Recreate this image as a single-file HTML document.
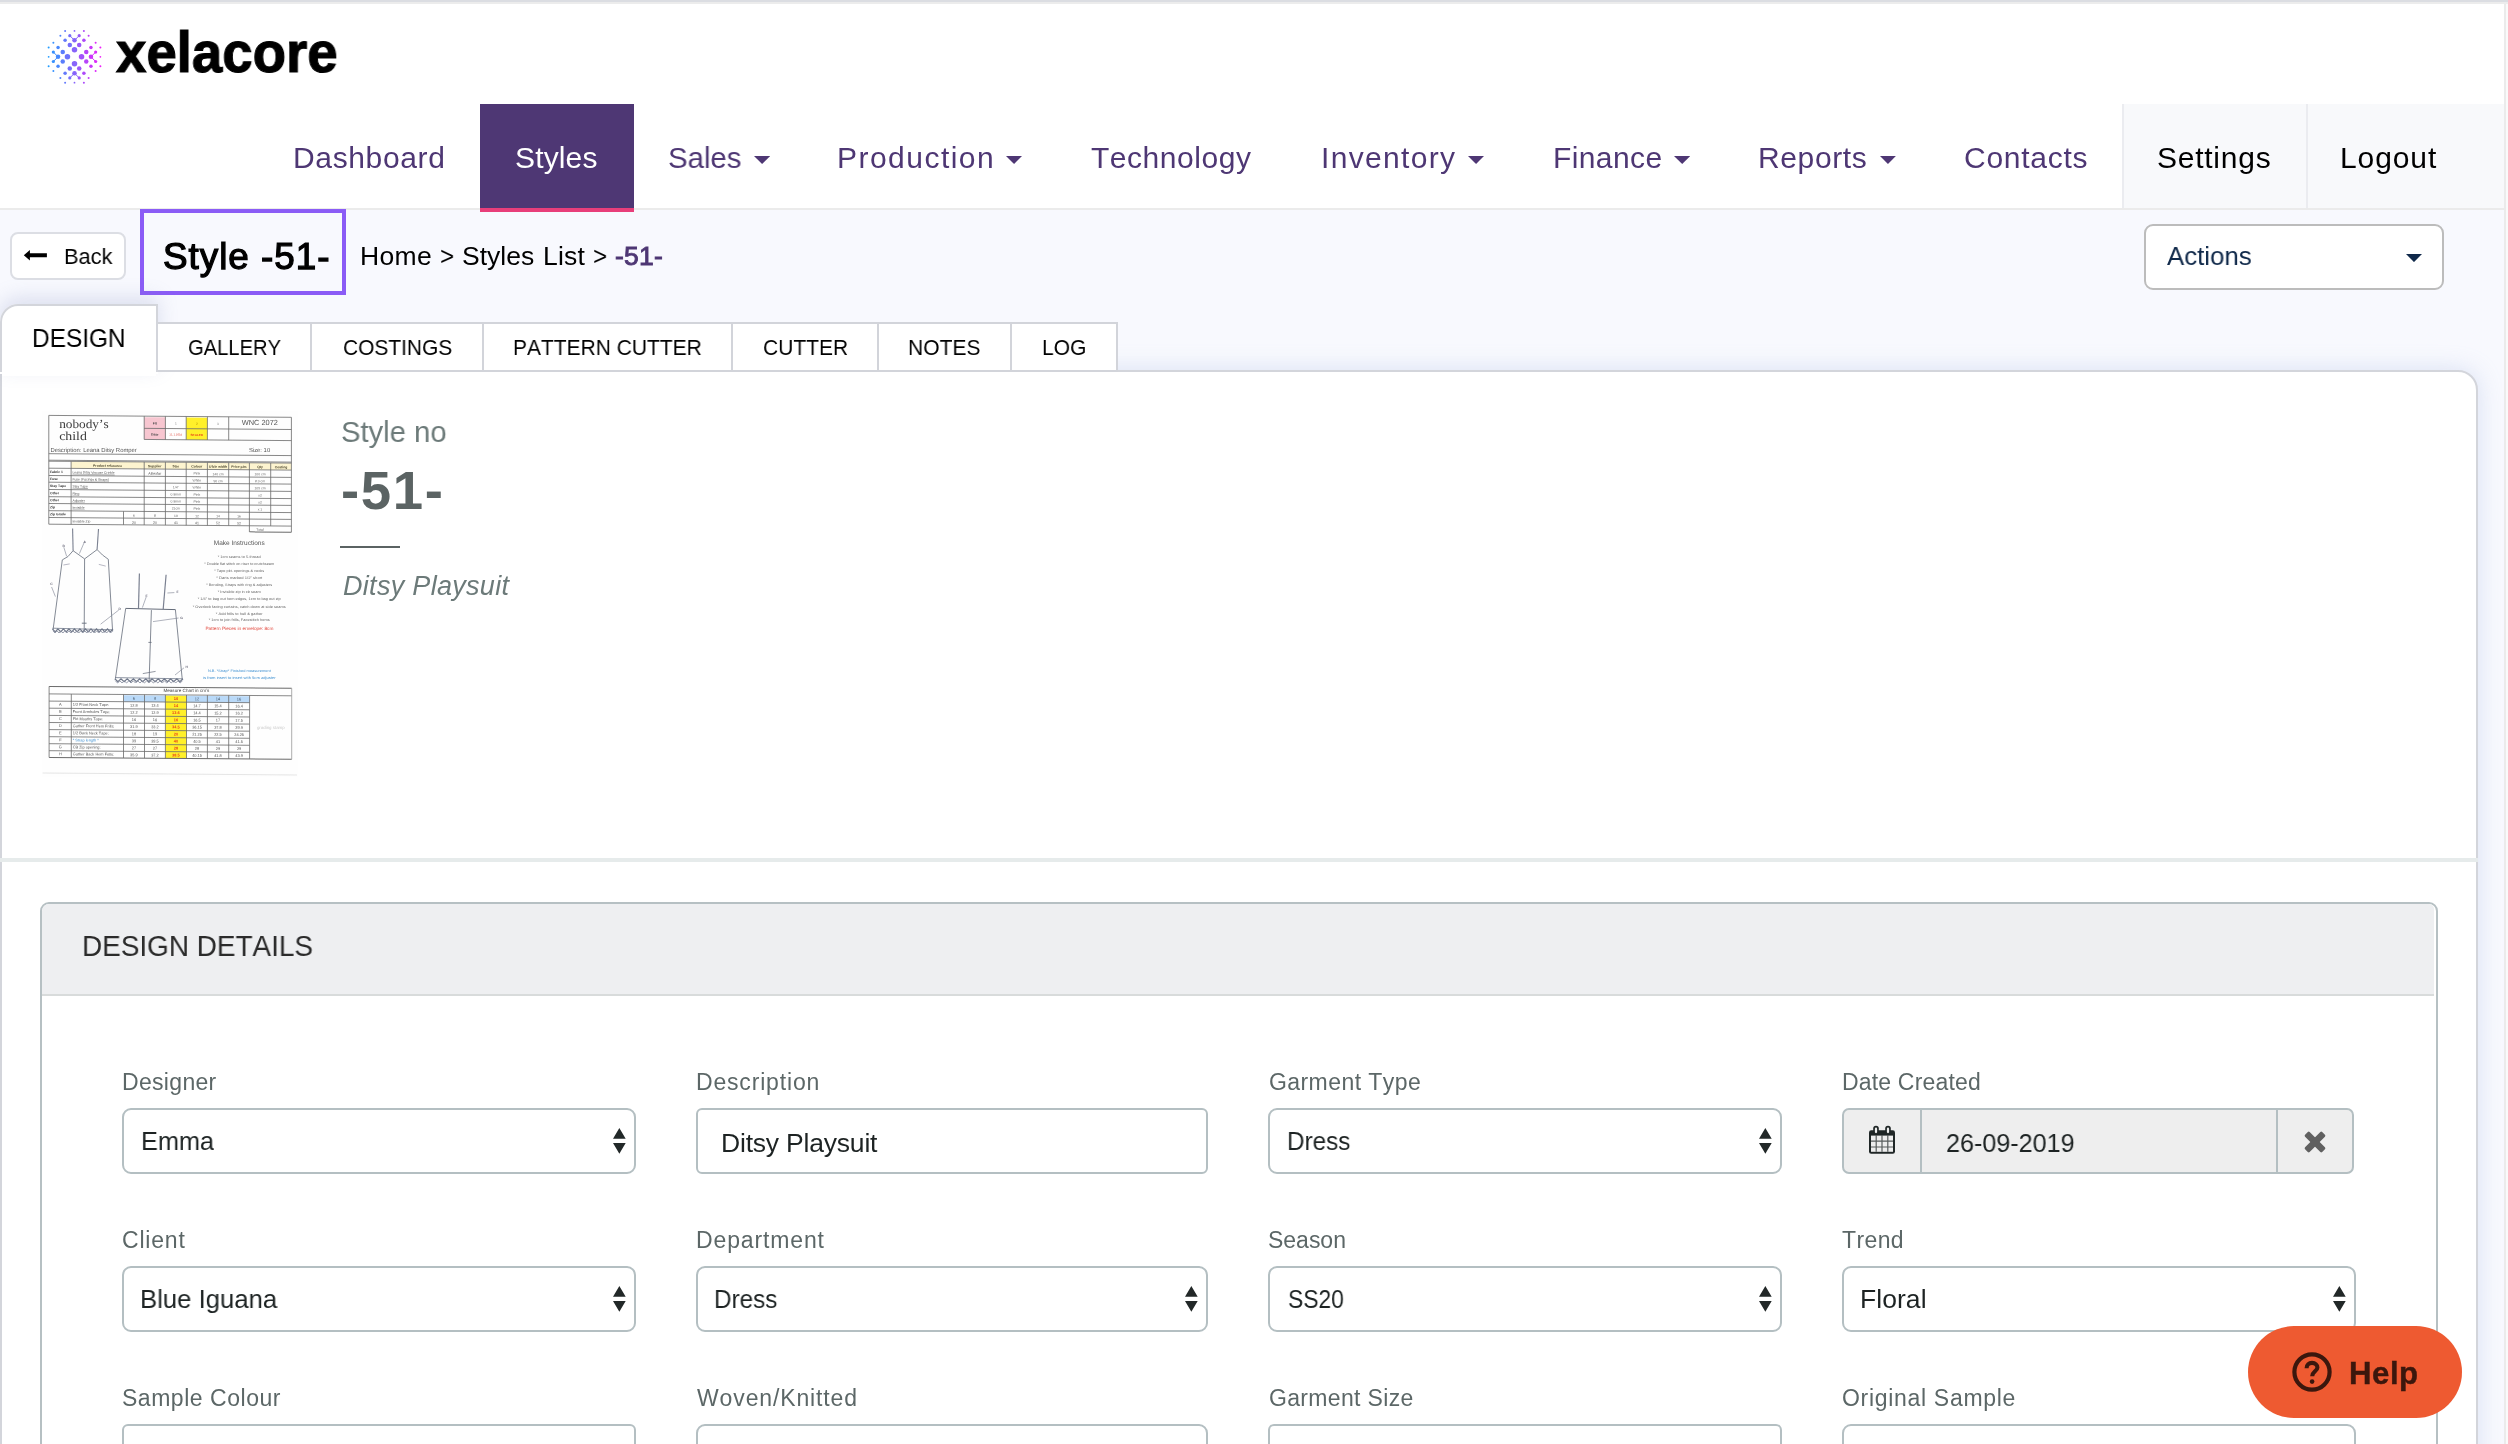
<!DOCTYPE html>
<html lang="en"><head><meta charset="utf-8"><title>Style -51-</title>
<style>
html,body{margin:0;padding:0}
html{width:2508px;height:1444px;overflow:hidden}
body{width:2508px;height:1444px;overflow:hidden;position:relative;background:#f8f9fe;font-family:"Liberation Sans",sans-serif;font-kerning:none}
#w{position:absolute;left:0;top:0;width:2508px;height:1444px;overflow:hidden}
#w>div,#w>span,#w>svg{position:absolute}
.t{white-space:pre;line-height:1;transform-origin:0 0;will-change:transform}
</style></head><body><div id="w">
<div style="left:0px;top:0px;width:2508px;height:2px;background:#dbdde2"></div>
<div style="left:0px;top:2px;width:2508px;height:2px;background:#ececec"></div>
<div style="left:0px;top:4px;width:2508px;height:204px;background:#fff"></div>
<div style="left:0px;top:208px;width:2508px;height:2px;background:#ebebeb"></div>
<div style="left:2122px;top:104px;width:382px;height:104px;background:#f8f9fb"></div>
<div style="left:2122px;top:104px;width:2px;height:104px;background:#ebecf0"></div>
<div style="left:2306px;top:104px;width:2px;height:104px;background:#ebecf0"></div>
<div style="left:480px;top:104px;width:154px;height:104px;background:#4e3774"></div>
<div style="left:480px;top:208px;width:154px;height:4px;background:#e83e7a"></div>
<svg style="left:40px;top:20px" width="70" height="74" viewBox="0 0 70 74"><circle cx="34.50" cy="29.75" r="2.75" fill="#8764fa"/><circle cx="29.80" cy="25.05" r="2.25" fill="#756efb"/><circle cx="39.20" cy="25.05" r="2.25" fill="#9a57fa"/><circle cx="25.10" cy="20.35" r="1.75" fill="#6379fc"/><circle cx="34.50" cy="20.35" r="2.25" fill="#8764fa"/><circle cx="43.90" cy="20.35" r="1.75" fill="#ad4afa"/><circle cx="20.40" cy="15.65" r="1.0" fill="#5183fd"/><circle cx="29.80" cy="15.65" r="1.6" fill="#756efb"/><circle cx="39.20" cy="15.65" r="1.6" fill="#9a57fa"/><circle cx="48.60" cy="15.65" r="1.0" fill="#bf3efa"/><circle cx="25.10" cy="10.95" r="1.0" fill="#6379fc"/><circle cx="34.50" cy="10.95" r="0.9" fill="#8764fa"/><circle cx="43.90" cy="10.95" r="1.0" fill="#ad4afa"/><line x1="34.50" y1="20.35" x2="29.80" y2="15.65" stroke="#7e69fa" stroke-width="1"/><line x1="34.50" y1="20.35" x2="39.20" y2="15.65" stroke="#905efa" stroke-width="1"/><circle cx="34.50" cy="43.85" r="2.75" fill="#8764fa"/><circle cx="29.80" cy="48.55" r="2.25" fill="#756efb"/><circle cx="39.20" cy="48.55" r="2.25" fill="#9a57fa"/><circle cx="25.10" cy="53.25" r="1.75" fill="#6379fc"/><circle cx="34.50" cy="53.25" r="2.25" fill="#8764fa"/><circle cx="43.90" cy="53.25" r="1.75" fill="#ad4afa"/><circle cx="20.40" cy="57.95" r="1.0" fill="#5183fd"/><circle cx="29.80" cy="57.95" r="1.6" fill="#756efb"/><circle cx="39.20" cy="57.95" r="1.6" fill="#9a57fa"/><circle cx="48.60" cy="57.95" r="1.0" fill="#bf3efa"/><circle cx="25.10" cy="62.65" r="1.0" fill="#6379fc"/><circle cx="34.50" cy="62.65" r="0.9" fill="#8764fa"/><circle cx="43.90" cy="62.65" r="1.0" fill="#ad4afa"/><line x1="34.50" y1="53.25" x2="29.80" y2="57.95" stroke="#7e69fa" stroke-width="1"/><line x1="34.50" y1="53.25" x2="39.20" y2="57.95" stroke="#905efa" stroke-width="1"/><circle cx="27.45" cy="36.80" r="2.75" fill="#6c73fb"/><circle cx="22.75" cy="32.10" r="2.25" fill="#5a7efc"/><circle cx="22.75" cy="41.50" r="2.25" fill="#5a7efc"/><circle cx="18.05" cy="27.40" r="1.75" fill="#4888fd"/><circle cx="18.05" cy="36.80" r="2.25" fill="#4888fd"/><circle cx="18.05" cy="46.20" r="1.75" fill="#4888fd"/><circle cx="13.35" cy="22.70" r="1.0" fill="#3692fe"/><circle cx="13.35" cy="32.10" r="1.6" fill="#3692fe"/><circle cx="13.35" cy="41.50" r="1.6" fill="#3692fe"/><circle cx="13.35" cy="50.90" r="1.0" fill="#3692fe"/><circle cx="8.65" cy="27.40" r="1.0" fill="#249cff"/><circle cx="8.65" cy="36.80" r="0.9" fill="#249cff"/><circle cx="8.65" cy="46.20" r="1.0" fill="#249cff"/><line x1="18.05" y1="36.80" x2="13.35" y2="32.10" stroke="#3f8dfd" stroke-width="1"/><line x1="18.05" y1="36.80" x2="13.35" y2="41.50" stroke="#3f8dfd" stroke-width="1"/><circle cx="41.55" cy="36.80" r="2.75" fill="#a351fa"/><circle cx="46.25" cy="32.10" r="2.25" fill="#b644fa"/><circle cx="46.25" cy="41.50" r="2.25" fill="#b644fa"/><circle cx="50.95" cy="27.40" r="1.75" fill="#c937fa"/><circle cx="50.95" cy="36.80" r="2.25" fill="#c937fa"/><circle cx="50.95" cy="46.20" r="1.75" fill="#c937fa"/><circle cx="55.65" cy="22.70" r="1.0" fill="#dc2afa"/><circle cx="55.65" cy="32.10" r="1.6" fill="#dc2afa"/><circle cx="55.65" cy="41.50" r="1.6" fill="#dc2afa"/><circle cx="55.65" cy="50.90" r="1.0" fill="#dc2afa"/><circle cx="60.35" cy="27.40" r="1.0" fill="#ee1efa"/><circle cx="60.35" cy="36.80" r="0.9" fill="#ee1efa"/><circle cx="60.35" cy="46.20" r="1.0" fill="#ee1efa"/><line x1="50.95" y1="36.80" x2="55.65" y2="32.10" stroke="#d231fa" stroke-width="1"/><line x1="50.95" y1="36.80" x2="55.65" y2="41.50" stroke="#d231fa" stroke-width="1"/></svg>
<span class="t" style="left:115.93px;top:24.57px;font-size:56.5px;color:#000;transform:scaleX(0.9661);font-weight:700;-webkit-text-stroke:1.1px #000;">xelacore</span>
<span class="t" style="left:293.34px;top:142.70px;font-size:30px;letter-spacing:0.641px;color:#4e3774;">Dashboard</span>
<span class="t" style="left:515.14px;top:142.70px;font-size:30px;letter-spacing:0.150px;color:#fff;">Styles</span>
<span class="t" style="left:667.57px;top:142.70px;font-size:30px;color:#4e3774;transform:scaleX(0.9794);">Sales</span>
<svg style="left:754.2px;top:156.3px" width="16.2" height="7.9" viewBox="0 0 16.2 7.9"><path d="M0 0H16.2L8.10 7.9Z" fill="#4e3774"/></svg>
<span class="t" style="left:837.34px;top:142.70px;font-size:30px;letter-spacing:1.476px;color:#4e3774;">Production</span>
<svg style="left:1005.9px;top:156.3px" width="16.1" height="7.9" viewBox="0 0 16.1 7.9"><path d="M0 0H16.1L8.05 7.9Z" fill="#4e3774"/></svg>
<span class="t" style="left:1091.43px;top:142.70px;font-size:30px;letter-spacing:0.537px;color:#4e3774;">Technology</span>
<span class="t" style="left:1321.23px;top:142.70px;font-size:30px;letter-spacing:1.329px;color:#4e3774;">Inventory</span>
<svg style="left:1468px;top:156.3px" width="16.1" height="7.9" viewBox="0 0 16.1 7.9"><path d="M0 0H16.1L8.05 7.9Z" fill="#4e3774"/></svg>
<span class="t" style="left:1553.34px;top:142.70px;font-size:30px;letter-spacing:0.394px;color:#4e3774;">Finance</span>
<svg style="left:1673.8px;top:156.3px" width="16.4" height="7.9" viewBox="0 0 16.4 7.9"><path d="M0 0H16.4L8.20 7.9Z" fill="#4e3774"/></svg>
<span class="t" style="left:1758.44px;top:142.70px;font-size:30px;letter-spacing:0.633px;color:#4e3774;">Reports</span>
<svg style="left:1880px;top:156.3px" width="15.9" height="7.9" viewBox="0 0 15.9 7.9"><path d="M0 0H15.9L7.95 7.9Z" fill="#4e3774"/></svg>
<span class="t" style="left:1963.58px;top:142.70px;font-size:30px;letter-spacing:0.731px;color:#4e3774;">Contacts</span>
<span class="t" style="left:2156.74px;top:142.70px;font-size:30px;letter-spacing:0.750px;color:#000;">Settings</span>
<span class="t" style="left:2339.94px;top:142.70px;font-size:30px;letter-spacing:0.905px;color:#000;">Logout</span>
<div style="left:10px;top:232px;width:116px;height:48px;background:#fff;border:2px solid #dcdee4;border-radius:8px;box-sizing:border-box"></div>
<svg style="left:22px;top:247px" width="28" height="16" viewBox="0 0 28 16"><path d="M1.8 8.3L7.9 3V6.3H24.9V10.3H7.9V13.6Z" fill="#000"/></svg>
<span class="t" style="left:64.11px;top:245.55px;font-size:22.5px;color:#000;transform:scaleX(0.9687);">Back</span>
<div style="left:140px;top:209px;width:206px;height:86px;border:4px solid #8b5cf6;box-sizing:border-box;background:#f8f9fe"></div>
<span class="t" style="left:162.93px;top:239.05px;font-size:36.8px;letter-spacing:0.992px;color:#000;-webkit-text-stroke:1.25px #000;">Style -51-</span>
<span class="t" style="left:359.83px;top:243.47px;font-size:26.5px;letter-spacing:0.354px;color:#000;">Home</span>
<span class="t" style="left:439.81px;top:243.47px;font-size:26.5px;color:#000;transform:scaleX(0.9088);">&gt;</span>
<span class="t" style="left:461.90px;top:243.47px;font-size:26.5px;letter-spacing:-0.000px;color:#000;">Styles</span>
<span class="t" style="left:543.13px;top:243.47px;font-size:26.5px;letter-spacing:0.177px;color:#000;">List</span>
<span class="t" style="left:593.41px;top:243.47px;font-size:26.5px;color:#000;transform:scaleX(0.9088);">&gt;</span>
<span class="t" style="left:615.32px;top:243.47px;font-size:26.5px;letter-spacing:0.210px;color:#4e3774;-webkit-text-stroke:0.9px #4e3774;">-51-</span>
<div style="left:2144px;top:224px;width:300px;height:66px;background:#fff;border:2px solid #bcbcbc;border-radius:9px;box-sizing:border-box"></div>
<span class="t" style="left:2167.05px;top:243.47px;font-size:26.5px;color:#10294a;transform:scaleX(0.9733);">Actions</span>
<svg style="left:2406px;top:253.9px" width="16.0" height="8.1" viewBox="0 0 16.0 8.1"><path d="M0 0H16.0L8.00 8.1Z" fill="#10294a"/></svg>
<div style="left:0px;top:370px;width:2478px;height:1100px;background:#fff;border:2px solid #d3d5db;border-top-right-radius:20px;box-sizing:border-box;box-shadow:0 0 24px rgba(150,170,215,.31)"></div>
<div style="left:0px;top:304px;width:158px;height:70px;background:#fff;border-top-left-radius:18px;box-shadow:0 -6px 20px rgba(125,140,190,.24)"></div>
<div style="left:156px;top:322px;width:962px;height:50px;background:#fff;border:2px solid #d2d4da;box-sizing:border-box"></div>
<div style="left:310px;top:324px;width:2px;height:46px;background:#d2d4da"></div>
<div style="left:482px;top:324px;width:2px;height:46px;background:#d2d4da"></div>
<div style="left:730.5px;top:324px;width:2px;height:46px;background:#d2d4da"></div>
<div style="left:876.5px;top:324px;width:2px;height:46px;background:#d2d4da"></div>
<div style="left:1010px;top:324px;width:2px;height:46px;background:#d2d4da"></div>
<span class="t" style="left:188.49px;top:336.75px;font-size:22.5px;color:#000;transform:scaleX(0.8965);">GALLERY</span>
<span class="t" style="left:343.14px;top:336.75px;font-size:22.5px;color:#000;transform:scaleX(0.9295);">COSTINGS</span>
<span class="t" style="left:512.98px;top:336.75px;font-size:22.5px;color:#000;transform:scaleX(0.9323);">PATTERN CUTTER</span>
<span class="t" style="left:762.53px;top:336.75px;font-size:22.5px;color:#000;transform:scaleX(0.9331);">CUTTER</span>
<span class="t" style="left:908.07px;top:336.75px;font-size:22.5px;color:#000;transform:scaleX(0.9353);">NOTES</span>
<span class="t" style="left:1041.68px;top:336.75px;font-size:22.5px;color:#000;transform:scaleX(0.9343);">LOG</span>
<div style="left:0px;top:304px;width:158px;height:68px;background:#fff;border:2px solid #d3d5db;border-bottom:none;border-top-left-radius:18px;box-sizing:border-box"></div>
<div style="left:2px;top:370px;width:154px;height:6px;background:#fff"></div>
<span class="t" style="left:31.60px;top:326.01px;font-size:25.5px;color:#000;transform:scaleX(0.9573);">DESIGN</span>
<svg style="left:40px;top:405px" width="262" height="380" viewBox="0 0 262 380" font-family="Liberation Sans,sans-serif" text-rendering="geometricPrecision"><defs><filter id="bl" x="-5%" y="-5%" width="110%" height="110%"><feGaussianBlur stdDeviation="0.35"/></filter></defs><rect x="2" y="6" width="256" height="366" fill="#fefefe"/><g filter="url(#bl)"><g transform="translate(9 10) skewY(0.45) translate(-9 -10)"><rect x="104.2" y="11.4" width="21.2" height="22.3" fill="#f7c6d0"/><rect x="146.2" y="11.4" width="21.2" height="22.3" fill="#fff02a"/><rect x="31.1" y="56.3" width="220.3" height="6.9" fill="#fdf4cf"/><path d="M8.8 10.4L251.4 10.4" stroke="#6a6a6a" stroke-width="0.8"/><path d="M8.8 48.7L251.4 48.7" stroke="#6a6a6a" stroke-width="0.8"/><path d="M8.8 55.2L251.4 55.2" stroke="#6a6a6a" stroke-width="0.8"/><path d="M8.8 56.2L251.4 56.2" stroke="#6a6a6a" stroke-width="0.8"/><path d="M8.8 63.2L251.4 63.2" stroke="#6a6a6a" stroke-width="0.8"/><path d="M8.8 70.5L251.4 70.5" stroke="#6a6a6a" stroke-width="0.8"/><path d="M8.8 77.2L251.4 77.2" stroke="#6a6a6a" stroke-width="0.8"/><path d="M8.8 84.5L251.4 84.5" stroke="#6a6a6a" stroke-width="0.8"/><path d="M8.8 91.7L251.4 91.7" stroke="#6a6a6a" stroke-width="0.8"/><path d="M8.8 98.5L251.4 98.5" stroke="#6a6a6a" stroke-width="0.8"/><path d="M8.8 105.7L251.4 105.7" stroke="#6a6a6a" stroke-width="0.8"/><path d="M8.8 112.5L251.4 112.5" stroke="#6a6a6a" stroke-width="0.8"/><path d="M8.8 119.2L251.4 119.2" stroke="#6a6a6a" stroke-width="0.8"/><path d="M8.8 10.4L8.8 119.2" stroke="#6a6a6a" stroke-width="0.8"/><path d="M251.4 10.4L251.4 125.3" stroke="#6a6a6a" stroke-width="0.8"/><path d="M104.2 22.6L251.4 22.6" stroke="#6a6a6a" stroke-width="0.8"/><path d="M104.2 33.7L251.4 33.7" stroke="#6a6a6a" stroke-width="0.8"/><path d="M104.2 10.4L104.2 33.7" stroke="#6a6a6a" stroke-width="0.8"/><path d="M125.4 10.4L125.4 33.7" stroke="#6a6a6a" stroke-width="0.8"/><path d="M146.2 10.4L146.2 33.7" stroke="#6a6a6a" stroke-width="0.8"/><path d="M167.4 10.4L167.4 33.7" stroke="#6a6a6a" stroke-width="0.8"/><path d="M188.7 10.4L188.7 33.7" stroke="#6a6a6a" stroke-width="0.8"/><path d="M31.1 56.2L31.1 119.2" stroke="#6a6a6a" stroke-width="0.8"/><path d="M104.2 56.2L104.2 119.2" stroke="#6a6a6a" stroke-width="0.8"/><path d="M125.4 56.2L125.4 119.2" stroke="#6a6a6a" stroke-width="0.8"/><path d="M146.2 56.2L146.2 119.2" stroke="#6a6a6a" stroke-width="0.8"/><path d="M167.4 56.2L167.4 119.2" stroke="#6a6a6a" stroke-width="0.8"/><path d="M188.7 56.2L188.7 119.2" stroke="#6a6a6a" stroke-width="0.8"/><path d="M209.4 56.2L209.4 119.2" stroke="#6a6a6a" stroke-width="0.8"/><path d="M230.7 56.2L230.7 119.2" stroke="#6a6a6a" stroke-width="0.8"/><path d="M83.5 105.7L83.5 119.2" stroke="#6a6a6a" stroke-width="0.8"/><path d="M209.4 119.2L209.4 125.3" stroke="#6a6a6a" stroke-width="0.8"/><path d="M209.4 125.3L251.4 125.3" stroke="#6a6a6a" stroke-width="1.0"/><text x="114.8" y="18.6" font-size="3.4" fill="#444" text-anchor="middle" font-weight="700">Fit</text><text x="114.8" y="29.8" font-size="3.4" fill="#444" text-anchor="middle" font-weight="700">Date</text><text x="135.8" y="18.6" font-size="3.2" fill="#777" text-anchor="middle" >1</text><text x="156.8" y="18.6" font-size="3.2" fill="#a80" text-anchor="middle" >2</text><text x="178.0" y="18.6" font-size="3.2" fill="#777" text-anchor="middle" >3</text><text x="135.8" y="29.6" font-size="2.9" fill="#e0483a" text-anchor="middle" >11.1.2019</text><text x="156.8" y="29.8" font-size="3.1" fill="#e8401c" text-anchor="middle" font-weight="700">SEALED</text><text x="67.6" y="61.4" font-size="3.4" fill="#4a452c" text-anchor="middle" font-weight="700">Product reference</text><text x="114.8" y="61.4" font-size="3.4" fill="#4a452c" text-anchor="middle" font-weight="700">Supplier</text><text x="135.8" y="61.4" font-size="3.4" fill="#4a452c" text-anchor="middle" font-weight="700">Size</text><text x="156.8" y="61.4" font-size="3.4" fill="#4a452c" text-anchor="middle" font-weight="700">Colour</text><text x="178.0" y="61.4" font-size="3.4" fill="#4a452c" text-anchor="middle" font-weight="700">U’ble width</text><text x="199.0" y="61.4" font-size="3.4" fill="#4a452c" text-anchor="middle" font-weight="700">Price p/m</text><text x="220.0" y="61.4" font-size="3.4" fill="#4a452c" text-anchor="middle" font-weight="700">Qty</text><text x="241.0" y="61.4" font-size="3.4" fill="#4a452c" text-anchor="middle" font-weight="700">Costing</text><text x="10.0" y="68.0" font-size="3.4" fill="#333" text-anchor="start" font-weight="700">Fabric 1</text><text x="32.4" y="68.3" font-size="3.4" fill="#555" text-anchor="start" text-decoration="underline">Leana Ditsy Viscose Crinkle</text><text x="10.0" y="75.0" font-size="3.4" fill="#333" text-anchor="start" font-weight="700">Fuse</text><text x="32.4" y="75.3" font-size="3.4" fill="#555" text-anchor="start" text-decoration="underline">Fuse (Facings &amp; Straps)</text><text x="10.0" y="82.0" font-size="3.4" fill="#333" text-anchor="start" font-weight="700">Stay Tape</text><text x="32.4" y="82.3" font-size="3.4" fill="#555" text-anchor="start" text-decoration="underline">Stay Tape</text><text x="10.0" y="89.2" font-size="3.4" fill="#333" text-anchor="start" font-weight="700">Other</text><text x="32.4" y="89.5" font-size="3.4" fill="#555" text-anchor="start" text-decoration="underline">Ring</text><text x="10.0" y="96.2" font-size="3.4" fill="#333" text-anchor="start" font-weight="700">Other</text><text x="32.4" y="96.5" font-size="3.4" fill="#555" text-anchor="start" text-decoration="underline">Adjuster</text><text x="10.0" y="103.2" font-size="3.4" fill="#333" text-anchor="start" font-weight="700">Zip</text><text x="32.4" y="103.5" font-size="3.4" fill="#555" text-anchor="start" text-decoration="underline">Invisible</text><text x="10.0" y="110.2" font-size="3.4" fill="#333" text-anchor="start" font-weight="700">Zip Grade</text><text x="32.4" y="117.3" font-size="3.4" fill="#555" text-anchor="start" >Invisible Zip</text><text x="114.8" y="68.9" font-size="3.6" fill="#555" text-anchor="middle" >Alltexfar</text><text x="135.8" y="82.4" font-size="3.4" fill="#666" text-anchor="middle" >1/4"</text><text x="135.8" y="89.6" font-size="3.4" fill="#666" text-anchor="middle" >0.8mm</text><text x="135.8" y="96.6" font-size="3.4" fill="#666" text-anchor="middle" >0.8mm</text><text x="135.8" y="103.6" font-size="3.4" fill="#666" text-anchor="middle" >21cm</text><text x="156.8" y="68.4" font-size="3.4" fill="#666" text-anchor="middle" >Pink</text><text x="156.8" y="75.4" font-size="3.4" fill="#666" text-anchor="middle" >White</text><text x="156.8" y="82.4" font-size="3.4" fill="#666" text-anchor="middle" >White</text><text x="156.8" y="89.6" font-size="3.4" fill="#666" text-anchor="middle" >Pink</text><text x="156.8" y="96.6" font-size="3.4" fill="#666" text-anchor="middle" >Pink</text><text x="156.8" y="103.6" font-size="3.4" fill="#666" text-anchor="middle" >Pink</text><text x="178.0" y="69.0" font-size="3.4" fill="#666" text-anchor="middle" >140 cm</text><text x="178.0" y="76.0" font-size="3.4" fill="#666" text-anchor="middle" >90 cm</text><text x="220.0" y="68.6" font-size="3.4" fill="#666" text-anchor="middle" >100 cm</text><text x="220.0" y="75.6" font-size="3.4" fill="#666" text-anchor="middle" >8.0 cm</text><text x="220.0" y="82.6" font-size="3.4" fill="#666" text-anchor="middle" >165 cm</text><text x="220.0" y="89.8" font-size="3.4" fill="#666" text-anchor="middle" >x2</text><text x="220.0" y="96.8" font-size="3.4" fill="#666" text-anchor="middle" >x2</text><text x="220.0" y="103.8" font-size="3.4" fill="#666" text-anchor="middle" >x 1</text><text x="93.9" y="111.0" font-size="3.3" fill="#666" text-anchor="middle" >6</text><text x="115.0" y="111.0" font-size="3.3" fill="#666" text-anchor="middle" >8</text><text x="135.9" y="111.0" font-size="3.3" fill="#666" text-anchor="middle" >10</text><text x="157.0" y="111.0" font-size="3.3" fill="#666" text-anchor="middle" >12</text><text x="178.0" y="111.0" font-size="3.3" fill="#666" text-anchor="middle" >14</text><text x="199.1" y="111.0" font-size="3.3" fill="#666" text-anchor="middle" >16</text><text x="93.9" y="118.0" font-size="3.5" fill="#555" text-anchor="middle" >30</text><text x="115.0" y="118.0" font-size="3.5" fill="#555" text-anchor="middle" >30</text><text x="135.9" y="118.0" font-size="3.5" fill="#555" text-anchor="middle" >41</text><text x="157.0" y="118.0" font-size="3.5" fill="#555" text-anchor="middle" >41</text><text x="178.0" y="118.0" font-size="3.5" fill="#555" text-anchor="middle" >52</text><text x="199.1" y="118.0" font-size="3.5" fill="#555" text-anchor="middle" >52</text><text x="220.0" y="124.2" font-size="3.3" fill="#555" text-anchor="middle" >Total</text><rect x="83.5" y="289.6" width="126.1" height="6.5" fill="#b9d9f8"/><rect x="125.4" y="289.6" width="21.1" height="63.0" fill="#fff02a"/><path d="M9.1 281.4L251.7 281.4" stroke="#6a6a6a" stroke-width="1.0"/><path d="M9.1 288.9L251.7 288.9" stroke="#6a6a6a" stroke-width="0.8"/><path d="M9.1 352.4L251.7 352.4" stroke="#6a6a6a" stroke-width="1.0"/><path d="M9.1 296.1L209.6 296.1" stroke="#6a6a6a" stroke-width="0.8"/><path d="M9.1 303.2L209.6 303.2" stroke="#6a6a6a" stroke-width="0.8"/><path d="M9.1 310.4L209.6 310.4" stroke="#6a6a6a" stroke-width="0.8"/><path d="M9.1 317.5L209.6 317.5" stroke="#6a6a6a" stroke-width="0.8"/><path d="M9.1 324.6L209.6 324.6" stroke="#6a6a6a" stroke-width="0.8"/><path d="M9.1 331.7L209.6 331.7" stroke="#6a6a6a" stroke-width="0.8"/><path d="M9.1 338.7L209.6 338.7" stroke="#6a6a6a" stroke-width="0.8"/><path d="M9.1 345.7L209.6 345.7" stroke="#6a6a6a" stroke-width="0.8"/><path d="M9.1 281.4L9.1 352.4" stroke="#6a6a6a" stroke-width="0.8"/><path d="M251.7 281.4L251.7 352.4" stroke="#999" stroke-width="0.8"/><path d="M31.3 288.9L31.3 352.4" stroke="#6a6a6a" stroke-width="0.8"/><path d="M83.5 288.9L83.5 352.4" stroke="#6a6a6a" stroke-width="0.8"/><path d="M104.5 288.9L104.5 352.4" stroke="#6a6a6a" stroke-width="0.8"/><path d="M125.4 288.9L125.4 352.4" stroke="#6a6a6a" stroke-width="0.8"/><path d="M146.5 288.9L146.5 352.4" stroke="#6a6a6a" stroke-width="0.8"/><path d="M167.4 288.9L167.4 352.4" stroke="#6a6a6a" stroke-width="0.8"/><path d="M188.7 288.9L188.7 352.4" stroke="#6a6a6a" stroke-width="0.8"/><path d="M209.6 288.9L209.6 352.4" stroke="#6a6a6a" stroke-width="0.8"/><text x="93.9" y="294.0" font-size="4.0" fill="#456" text-anchor="middle" >6</text><text x="115.0" y="294.0" font-size="4.0" fill="#456" text-anchor="middle" >8</text><text x="135.9" y="294.0" font-size="4.0" fill="#e8401c" text-anchor="middle" font-weight="700">10</text><text x="157.0" y="294.0" font-size="4.0" fill="#456" text-anchor="middle" >12</text><text x="178.0" y="294.0" font-size="4.0" fill="#456" text-anchor="middle" >14</text><text x="199.1" y="294.0" font-size="4.0" fill="#456" text-anchor="middle" >16</text><text x="20.4" y="300.6" font-size="4.0" fill="#555" text-anchor="middle" >A</text><text x="32.7" y="300.6" font-size="3.9" fill="#555" text-anchor="start" >1/2 Front Neck Tape:</text><text x="93.9" y="301.0" font-size="3.9" fill="#555" text-anchor="middle" >12.8</text><text x="115.0" y="301.0" font-size="3.9" fill="#555" text-anchor="middle" >13.4</text><text x="135.9" y="301.0" font-size="3.9" fill="#e8401c" text-anchor="middle" font-weight="700">14</text><text x="157.0" y="301.0" font-size="3.9" fill="#555" text-anchor="middle" >14.7</text><text x="178.0" y="301.0" font-size="3.9" fill="#555" text-anchor="middle" >15.4</text><text x="199.1" y="301.0" font-size="3.9" fill="#555" text-anchor="middle" >16.4</text><text x="20.4" y="307.7" font-size="4.0" fill="#555" text-anchor="middle" >B</text><text x="32.7" y="307.7" font-size="3.9" fill="#555" text-anchor="start" >Front Armholes Tape:</text><text x="93.9" y="308.1" font-size="3.9" fill="#555" text-anchor="middle" >12.2</text><text x="115.0" y="308.1" font-size="3.9" fill="#555" text-anchor="middle" >12.9</text><text x="135.9" y="308.1" font-size="3.9" fill="#e8401c" text-anchor="middle" font-weight="700">13.6</text><text x="157.0" y="308.1" font-size="3.9" fill="#555" text-anchor="middle" >14.4</text><text x="178.0" y="308.1" font-size="3.9" fill="#555" text-anchor="middle" >15.2</text><text x="199.1" y="308.1" font-size="3.9" fill="#555" text-anchor="middle" >16.2</text><text x="20.4" y="314.9" font-size="4.0" fill="#555" text-anchor="middle" >C</text><text x="32.7" y="314.9" font-size="3.9" fill="#555" text-anchor="start" >Pkt Mouths Tape:</text><text x="93.9" y="315.3" font-size="3.9" fill="#555" text-anchor="middle" >16</text><text x="115.0" y="315.3" font-size="3.9" fill="#555" text-anchor="middle" >16</text><text x="135.9" y="315.3" font-size="3.9" fill="#e8401c" text-anchor="middle" font-weight="700">16</text><text x="157.0" y="315.3" font-size="3.9" fill="#555" text-anchor="middle" >16.5</text><text x="178.0" y="315.3" font-size="3.9" fill="#555" text-anchor="middle" >17</text><text x="199.1" y="315.3" font-size="3.9" fill="#555" text-anchor="middle" >17.5</text><text x="20.4" y="322.0" font-size="4.0" fill="#555" text-anchor="middle" >D</text><text x="32.7" y="322.0" font-size="3.9" fill="#555" text-anchor="start" >Gather Front Hem Frills:</text><text x="93.9" y="322.4" font-size="3.9" fill="#555" text-anchor="middle" >31.9</text><text x="115.0" y="322.4" font-size="3.9" fill="#555" text-anchor="middle" >33.2</text><text x="135.9" y="322.4" font-size="3.9" fill="#e8401c" text-anchor="middle" font-weight="700">34.5</text><text x="157.0" y="322.4" font-size="3.9" fill="#555" text-anchor="middle" >36.15</text><text x="178.0" y="322.4" font-size="3.9" fill="#555" text-anchor="middle" >37.8</text><text x="199.1" y="322.4" font-size="3.9" fill="#555" text-anchor="middle" >39.9</text><text x="20.4" y="329.1" font-size="4.0" fill="#555" text-anchor="middle" >E</text><text x="32.7" y="329.1" font-size="3.9" fill="#555" text-anchor="start" >1/2 Back Neck Tape:</text><text x="93.9" y="329.5" font-size="3.9" fill="#555" text-anchor="middle" >18</text><text x="115.0" y="329.5" font-size="3.9" fill="#555" text-anchor="middle" >19</text><text x="135.9" y="329.5" font-size="3.9" fill="#e8401c" text-anchor="middle" font-weight="700">20</text><text x="157.0" y="329.5" font-size="3.9" fill="#555" text-anchor="middle" >21.25</text><text x="178.0" y="329.5" font-size="3.9" fill="#555" text-anchor="middle" >22.5</text><text x="199.1" y="329.5" font-size="3.9" fill="#555" text-anchor="middle" >24.25</text><text x="20.4" y="336.2" font-size="4.0" fill="#555" text-anchor="middle" >F</text><text x="32.7" y="336.2" font-size="3.9" fill="#3c8ed0" text-anchor="start" >* Strap length *</text><text x="93.9" y="336.6" font-size="3.9" fill="#555" text-anchor="middle" >39</text><text x="115.0" y="336.6" font-size="3.9" fill="#555" text-anchor="middle" >39.5</text><text x="135.9" y="336.6" font-size="3.9" fill="#e8401c" text-anchor="middle" font-weight="700">40</text><text x="157.0" y="336.6" font-size="3.9" fill="#555" text-anchor="middle" >40.5</text><text x="178.0" y="336.6" font-size="3.9" fill="#555" text-anchor="middle" >41</text><text x="199.1" y="336.6" font-size="3.9" fill="#555" text-anchor="middle" >41.5</text><text x="20.4" y="343.2" font-size="4.0" fill="#555" text-anchor="middle" >G</text><text x="32.7" y="343.2" font-size="3.9" fill="#555" text-anchor="start" >CB Zip opening:</text><text x="93.9" y="343.6" font-size="3.9" fill="#555" text-anchor="middle" >27</text><text x="115.0" y="343.6" font-size="3.9" fill="#555" text-anchor="middle" >27</text><text x="135.9" y="343.6" font-size="3.9" fill="#e8401c" text-anchor="middle" font-weight="700">28</text><text x="157.0" y="343.6" font-size="3.9" fill="#555" text-anchor="middle" >28</text><text x="178.0" y="343.6" font-size="3.9" fill="#555" text-anchor="middle" >29</text><text x="199.1" y="343.6" font-size="3.9" fill="#555" text-anchor="middle" >29</text><text x="20.4" y="350.2" font-size="4.0" fill="#555" text-anchor="middle" >H</text><text x="32.7" y="350.2" font-size="3.9" fill="#555" text-anchor="start" >Gather Back Hem Frills:</text><text x="93.9" y="350.6" font-size="3.9" fill="#555" text-anchor="middle" >35.9</text><text x="115.0" y="350.6" font-size="3.9" fill="#555" text-anchor="middle" >37.2</text><text x="135.9" y="350.6" font-size="3.9" fill="#e8401c" text-anchor="middle" font-weight="700">38.5</text><text x="157.0" y="350.6" font-size="3.9" fill="#555" text-anchor="middle" >40.15</text><text x="178.0" y="350.6" font-size="3.9" fill="#555" text-anchor="middle" >41.8</text><text x="199.1" y="350.6" font-size="3.9" fill="#555" text-anchor="middle" >43.9</text></g><text x="19.2" y="23.0" font-size="12.4" fill="#3a3a3a" text-anchor="start" font-family="Liberation Serif,serif" textLength="49.4" lengthAdjust="spacingAndGlyphs">nobody’s</text><text x="19.2" y="35.4" font-size="12.4" fill="#3a3a3a" text-anchor="start" font-family="Liberation Serif,serif" textLength="27.6" lengthAdjust="spacingAndGlyphs">child</text><text x="10.4" y="46.6" font-size="5.9" fill="#555" text-anchor="start" >Description:  Leana Ditsy Romper</text><text x="208.9" y="47.4" font-size="5.9" fill="#555" text-anchor="start" >Size: 10</text><text x="219.8" y="20.3" font-size="7.4" fill="#555" text-anchor="middle" >WNC 2072</text><path d="M32.6 123.4L33.1 145.7" stroke="#7a8090" stroke-width="1.1" fill="none" /><path d="M58.5 124.0L57.1 144.6" stroke="#7a8090" stroke-width="1.1" fill="none" /><path d="M33.1 145.7L44.6 153.9L57.1 144.6" stroke="#656c7a" stroke-width="0.8" fill="none" /><path d="M33.1 145.7L28.0 151.5L22.3 154.9L13.1 224.6" stroke="#656c7a" stroke-width="0.8" fill="none" /><path d="M57.1 144.6L62.5 150.0L68.3 154.3L72.6 226.3" stroke="#656c7a" stroke-width="0.8" fill="none" /><path d="M44.6 153.9L44.2 227.0" stroke="#656c7a" stroke-width="0.8" fill="none" /><path d="M23.4 160.0L29.7 158.9" stroke="#99a" stroke-width="0.7" fill="none" /><path d="M58.8 159.4L65.7 161.1" stroke="#99a" stroke-width="0.7" fill="none" /><path d="M41.8 218.2L46.6 218.2" stroke="#656c7a" stroke-width="0.9" fill="none" /><path d="M12.4 223.9L15.2 226.8L17.9 223.9L20.7 226.8L23.4 223.9L26.2 226.8L28.9 223.9L31.7 226.8L34.4 223.9L37.2 226.8L39.9 223.9L42.7 226.8L45.5 223.9L48.2 226.8L51.0 223.9L53.7 226.8L56.5 223.9L59.2 226.8L62.0 223.9L64.7 226.8L67.5 223.9L70.2 226.8L73.0 223.9" stroke="#70788a" stroke-width="1.2" fill="none" /><path d="M13.0 225.8L15.0 228.0L17.0 225.8L19.0 228.0L20.9 225.8L22.9 228.0L24.9 225.8L26.9 228.0L28.9 225.8L30.9 228.0L32.9 225.8L34.9 228.0L36.8 225.8L38.8 228.0L40.8 225.8L42.8 228.0L44.8 225.8L46.8 228.0L48.8 225.8L50.7 228.0L52.7 225.8L54.7 228.0L56.7 225.8L58.7 228.0L60.7 225.8L62.7 228.0L64.7 225.8L66.6 228.0L68.6 225.8L70.6 228.0L72.6 225.8" stroke="#8a90a0" stroke-width="0.9" fill="none" /><path d="M12.6 223.2L73.0 224.8" stroke="#70788a" stroke-width="0.8" fill="none" /><path d="M99.4 168.6L98.5 203.4" stroke="#7a8090" stroke-width="1.2" fill="none" /><path d="M126.1 169.7L123.2 204.0" stroke="#7a8090" stroke-width="1.2" fill="none" /><path d="M85.7 203.4L135.4 204.6" stroke="#656c7a" stroke-width="1.0" fill="none" /><path d="M85.7 203.4L75.4 273.7" stroke="#656c7a" stroke-width="0.8" fill="none" /><path d="M135.4 204.6L142.3 274.9" stroke="#656c7a" stroke-width="0.8" fill="none" /><path d="M111.4 205.1L109.1 276.6" stroke="#656c7a" stroke-width="0.8" fill="none" /><path d="M108.4 237.4L111.6 237.4" stroke="#656c7a" stroke-width="0.8" fill="none" /><path d="M102.8 268.6L115.6 266.4" stroke="#656c7a" stroke-width="0.7" fill="none" /><path d="M74.8 273.7L77.9 276.6L81.0 273.7L84.1 276.6L87.2 273.7L90.3 276.6L93.4 273.7L96.5 276.6L99.6 273.7L102.7 276.6L105.8 273.7L108.9 276.6L112.0 273.7L115.1 276.6L118.2 273.7L121.3 276.6L124.4 273.7L127.5 276.6L130.6 273.7L133.7 276.6L136.8 273.7L139.9 276.6L143.0 273.7" stroke="#70788a" stroke-width="1.2" fill="none" /><path d="M75.4 275.8L77.6 278.0L79.9 275.8L82.1 278.0L84.3 275.8L86.6 278.0L88.8 275.8L91.0 278.0L93.3 275.8L95.5 278.0L97.7 275.8L100.0 278.0L102.2 275.8L104.4 278.0L106.7 275.8L108.9 278.0L111.1 275.8L113.4 278.0L115.6 275.8L117.8 278.0L120.1 275.8L122.3 278.0L124.5 275.8L126.8 278.0L129.0 275.8L131.2 278.0L133.5 275.8L135.7 278.0L137.9 275.8L140.2 278.0L142.4 275.8" stroke="#8a90a0" stroke-width="0.9" fill="none" /><path d="M75.0 272.6L142.6 273.8" stroke="#70788a" stroke-width="0.8" fill="none" /><path d="M44.6 136.5L39.4 148.6" stroke="#7a8090" stroke-width="0.6" fill="none" /><path d="M23.8 142.2L26.6 151.2" stroke="#7a8090" stroke-width="0.6" fill="none" /><path d="M11.6 182.0L15.4 191.6" stroke="#7a8090" stroke-width="0.6" fill="none" /><path d="M78.8 205.0L60.6 219.2" stroke="#7a8090" stroke-width="0.6" fill="none" /><path d="M106.2 192.0L102.4 202.6" stroke="#7a8090" stroke-width="0.6" fill="none" /><path d="M127.4 188.0L134.4 187.6" stroke="#7a8090" stroke-width="0.6" fill="none" /><path d="M138.6 213.0L113.0 216.6" stroke="#7a8090" stroke-width="0.6" fill="none" /><path d="M144.0 262.8L135.0 270.0" stroke="#7a8090" stroke-width="0.6" fill="none" /><text x="44.8" y="138.2" font-size="3.3" fill="#667" text-anchor="middle" font-weight="700">A</text><text x="23.6" y="141.6" font-size="3.3" fill="#667" text-anchor="middle" font-weight="700">B</text><text x="11.4" y="179.8" font-size="3.3" fill="#667" text-anchor="middle" font-weight="700">C</text><text x="79.6" y="204.6" font-size="3.3" fill="#667" text-anchor="middle" font-weight="700">D</text><text x="106.6" y="192.2" font-size="3.3" fill="#667" text-anchor="middle" font-weight="700">E</text><text x="137.4" y="188.4" font-size="3.3" fill="#667" text-anchor="middle" font-weight="700">F</text><text x="141.6" y="213.6" font-size="3.3" fill="#667" text-anchor="middle" font-weight="700">G</text><text x="146.6" y="263.2" font-size="3.3" fill="#667" text-anchor="middle" font-weight="700">H</text><text x="199.2" y="140.2" font-size="6.5" fill="#555" text-anchor="middle" >Make Instructions</text><text x="199.2" y="153.1" font-size="3.6" fill="#666" text-anchor="middle" textLength="43" lengthAdjust="spacingAndGlyphs">* 1cm seams to 5-thread</text><text x="199.2" y="160.2" font-size="3.6" fill="#666" text-anchor="middle" textLength="70" lengthAdjust="spacingAndGlyphs">* Double flat stitch on riser to crutchseam</text><text x="199.2" y="167.2" font-size="3.6" fill="#666" text-anchor="middle" textLength="50" lengthAdjust="spacingAndGlyphs">* Tape  pkt. openings &amp; necks</text><text x="199.2" y="174.3" font-size="3.6" fill="#666" text-anchor="middle" textLength="46" lengthAdjust="spacingAndGlyphs">* Darts marked 1/2" short</text><text x="199.2" y="181.1" font-size="3.6" fill="#666" text-anchor="middle" textLength="66" lengthAdjust="spacingAndGlyphs">* Bonding, Straps with ring &amp; adjusters</text><text x="199.2" y="188.2" font-size="3.6" fill="#666" text-anchor="middle" textLength="43" lengthAdjust="spacingAndGlyphs">* Invisible zip in cb seam</text><text x="199.2" y="195.4" font-size="3.6" fill="#666" text-anchor="middle" textLength="83" lengthAdjust="spacingAndGlyphs">* 1/4" to bag out hem edges, 1cm to bag out zip</text><text x="199.2" y="202.5" font-size="3.6" fill="#666" text-anchor="middle" textLength="93" lengthAdjust="spacingAndGlyphs">* Overlock facing curtains, catch down at side seams</text><text x="199.2" y="209.5" font-size="3.6" fill="#666" text-anchor="middle" textLength="47" lengthAdjust="spacingAndGlyphs">* Add frills to hull &amp; gather</text><text x="199.2" y="216.3" font-size="3.6" fill="#666" text-anchor="middle" textLength="61" lengthAdjust="spacingAndGlyphs">* 1cm to join frills, Facestitch hems</text><text x="199.4" y="224.6" font-size="4.6" fill="#e2463c" text-anchor="middle" textLength="68" lengthAdjust="spacingAndGlyphs">Pattern Pieces in envelope: 8cm</text><text x="199.4" y="266.8" font-size="3.6" fill="#3c8ed0" text-anchor="middle" textLength="63" lengthAdjust="spacingAndGlyphs">N.B. *Strap* Finished measurement</text><text x="199.4" y="274.0" font-size="3.8" fill="#3c8ed0" text-anchor="middle" textLength="72.5" lengthAdjust="spacingAndGlyphs">is from insert to insert with 5cm adjuster</text><text x="146.4" y="286.7" font-size="4.6" fill="#444" text-anchor="middle" >Measure Chart in cm’s</text><text x="230.8" y="323.6" font-size="4.4" fill="#ccc" text-anchor="middle" >grading stamp</text><path d="M2.6 368.0L257.0 370.0" stroke="#e2e2e2" stroke-width="0.9"/></g></svg>
<span class="t" style="left:340.97px;top:416.91px;font-size:30px;color:#6c7a79;transform:scaleX(0.9738);">Style no</span>
<span class="t" style="left:340.67px;top:463.87px;font-size:54.5px;letter-spacing:1.631px;color:#5b6363;font-weight:700;">-51-</span>
<div style="left:340px;top:545.5px;width:60px;height:2.6px;background:#5b6363"></div>
<span class="t" style="left:342.97px;top:573.04px;font-size:27px;letter-spacing:0.304px;color:#6c7a79;font-style:italic;">Ditsy Playsuit</span>
<div style="left:0px;top:858px;width:2478px;height:4px;background:#e6ebeb"></div>
<div style="left:40px;top:902px;width:2398px;height:600px;background:#fff;border:2px solid #b6c0c3;border-radius:9px;box-sizing:border-box"></div>
<div style="left:42px;top:904px;width:2392px;height:90px;background:#eeeff1;border-radius:7px 5px 0 0"></div>
<div style="left:42px;top:994px;width:2392px;height:2px;background:#d8dbdb"></div>
<span class="t" style="left:81.51px;top:930.97px;font-size:29.8px;color:#2b2b2b;transform:scaleX(0.9365);">DESIGN DETAILS</span>
<span class="t" style="left:122.31px;top:1070.93px;font-size:23px;letter-spacing:0.318px;color:#5c6767;">Designer</span>
<span class="t" style="left:696.31px;top:1070.93px;font-size:23px;letter-spacing:0.824px;color:#5c6767;">Description</span>
<span class="t" style="left:1268.84px;top:1070.93px;font-size:23px;letter-spacing:0.426px;color:#5c6767;">Garment Type</span>
<span class="t" style="left:1842.31px;top:1070.93px;font-size:23px;letter-spacing:0.179px;color:#5c6767;">Date Created</span>
<div style="left:122px;top:1108px;width:514px;height:66px;background:#fff;border:2px solid #b4bfc2;border-radius:9px;box-sizing:border-box"></div>
<svg style="left:613.45px;top:1128.0px" width="12.7" height="26" viewBox="0 0 12.7 26"><path d="M0 10.8L6.35 0L12.7 10.8Z M0 14.9H12.7L6.35 25.8Z" fill="#222828"/></svg>
<span class="t" style="left:140.73px;top:1128.07px;font-size:26.5px;color:#1d2323;transform:scaleX(0.9544);">Emma</span>
<div style="left:696px;top:1108px;width:512px;height:66px;background:#fff;border:2px solid #b4bfc2;border-radius:6px;box-sizing:border-box"></div>
<span class="t" style="left:721.43px;top:1129.97px;font-size:26.5px;letter-spacing:-0.198px;color:#1d2323;">Ditsy Playsuit</span>
<div style="left:1268px;top:1108px;width:514px;height:66px;background:#fff;border:2px solid #b4bfc2;border-radius:9px;box-sizing:border-box"></div>
<svg style="left:1759.15px;top:1128.0px" width="12.7" height="26" viewBox="0 0 12.7 26"><path d="M0 10.8L6.35 0L12.7 10.8Z M0 14.9H12.7L6.35 25.8Z" fill="#222828"/></svg>
<span class="t" style="left:1287.01px;top:1128.07px;font-size:26.5px;color:#1d2323;transform:scaleX(0.9142);">Dress</span>
<div style="left:1842px;top:1108px;width:512px;height:66px;background:#eee;border:2px solid #b4bfc2;border-radius:7px;box-sizing:border-box"></div>
<div style="left:1920px;top:1110px;width:2px;height:62px;background:#b4bfc2"></div>
<div style="left:2276px;top:1110px;width:2px;height:62px;background:#b4bfc2"></div>
<svg style="left:1867px;top:1124px" width="30" height="32" viewBox="0 0 30 32"><path d="M2 8.4Q2 6.2 4.2 6.2H25.8Q28 6.2 28 8.4V27.6Q28 29.8 25.8 29.8H4.2Q2 29.8 2 27.6Z" fill="#1f2626"/><rect x="4" y="11.6" width="22" height="16.2" fill="#eee"/><g stroke="#1f2626" stroke-opacity=".72" stroke-width="1.2"><path d="M9.2 11.6V27.8M15 11.6V27.8M20.8 11.6V27.8M4 17.2H26M4 23H26"/></g><rect x="6.2" y="1.8" width="5.6" height="8.6" rx="2.8" fill="#1f2626"/><rect x="18.2" y="1.8" width="5.6" height="8.6" rx="2.8" fill="#1f2626"/><rect x="7.9" y="3.6" width="2.2" height="5.6" rx="1.1" fill="#eee"/><rect x="19.9" y="3.6" width="2.2" height="5.6" rx="1.1" fill="#eee"/></svg>
<svg style="left:2301.7px;top:1128.5px" width="26" height="26" viewBox="-13 -13 26 26"><g fill="#606060"><rect x="-12.1" y="-3.25" width="24.2" height="6.5" rx="1.3" transform="rotate(45)"/><rect x="-12.1" y="-3.25" width="24.2" height="6.5" rx="1.3" transform="rotate(-45)"/></g></svg>
<span class="t" style="left:1946.24px;top:1129.97px;font-size:26.5px;color:#1d2323;transform:scaleX(0.9491);">26-09-2019</span>
<span class="t" style="left:122.43px;top:1228.93px;font-size:23px;letter-spacing:0.807px;color:#5c6767;">Client</span>
<span class="t" style="left:696.31px;top:1228.93px;font-size:23px;letter-spacing:0.865px;color:#5c6767;">Department</span>
<span class="t" style="left:1268.36px;top:1228.93px;font-size:23px;letter-spacing:-0.014px;color:#5c6767;">Season</span>
<span class="t" style="left:1842.48px;top:1228.93px;font-size:23px;letter-spacing:0.379px;color:#5c6767;">Trend</span>
<div style="left:122px;top:1266px;width:514px;height:66px;background:#fff;border:2px solid #b4bfc2;border-radius:9px;box-sizing:border-box"></div>
<svg style="left:613.45px;top:1286.0px" width="12.7" height="26" viewBox="0 0 12.7 26"><path d="M0 10.8L6.35 0L12.7 10.8Z M0 14.9H12.7L6.35 25.8Z" fill="#222828"/></svg>
<span class="t" style="left:140.29px;top:1285.77px;font-size:26.5px;color:#1d2323;transform:scaleX(0.9693);">Blue Iguana</span>
<div style="left:696px;top:1266px;width:512px;height:66px;background:#fff;border:2px solid #b4bfc2;border-radius:9px;box-sizing:border-box"></div>
<svg style="left:1185.2px;top:1286.0px" width="12.7" height="26" viewBox="0 0 12.7 26"><path d="M0 10.8L6.35 0L12.7 10.8Z M0 14.9H12.7L6.35 25.8Z" fill="#222828"/></svg>
<span class="t" style="left:714.01px;top:1285.77px;font-size:26.5px;color:#1d2323;transform:scaleX(0.9142);">Dress</span>
<div style="left:1268px;top:1266px;width:514px;height:66px;background:#fff;border:2px solid #b4bfc2;border-radius:9px;box-sizing:border-box"></div>
<svg style="left:1759.15px;top:1286.0px" width="12.7" height="26" viewBox="0 0 12.7 26"><path d="M0 10.8L6.35 0L12.7 10.8Z M0 14.9H12.7L6.35 25.8Z" fill="#222828"/></svg>
<span class="t" style="left:1287.96px;top:1285.77px;font-size:26.5px;color:#1d2323;transform:scaleX(0.8628);">SS20</span>
<div style="left:1842px;top:1266px;width:514px;height:66px;background:#fff;border:2px solid #b4bfc2;border-radius:9px;box-sizing:border-box"></div>
<svg style="left:2333.45px;top:1286.0px" width="12.7" height="26" viewBox="0 0 12.7 26"><path d="M0 10.8L6.35 0L12.7 10.8Z M0 14.9H12.7L6.35 25.8Z" fill="#222828"/></svg>
<span class="t" style="left:1860.23px;top:1285.77px;font-size:26.5px;letter-spacing:0.057px;color:#1d2323;">Floral</span>
<span class="t" style="left:122.36px;top:1386.93px;font-size:23px;letter-spacing:0.525px;color:#5c6767;">Sample Colour</span>
<span class="t" style="left:696.70px;top:1386.93px;font-size:23px;letter-spacing:0.875px;color:#5c6767;">Woven/Knitted</span>
<span class="t" style="left:1268.84px;top:1386.93px;font-size:23px;letter-spacing:0.334px;color:#5c6767;">Garment Size</span>
<span class="t" style="left:1842.41px;top:1386.93px;font-size:23px;letter-spacing:0.692px;color:#5c6767;">Original Sample</span>
<div style="left:122px;top:1424px;width:514px;height:66px;background:#fff;border:2px solid #b4bfc2;border-radius:6px;box-sizing:border-box"></div>
<div style="left:696px;top:1424px;width:512px;height:66px;background:#fff;border:2px solid #b4bfc2;border-radius:9px;box-sizing:border-box"></div>
<div style="left:1268px;top:1424px;width:514px;height:66px;background:#fff;border:2px solid #b4bfc2;border-radius:6px;box-sizing:border-box"></div>
<div style="left:1842px;top:1424px;width:514px;height:66px;background:#fff;border:2px solid #b4bfc2;border-radius:9px;box-sizing:border-box"></div>
<div style="left:2248px;top:1326px;width:214px;height:92px;background:#ee5a31;border-radius:46px"></div>
<svg style="left:2290px;top:1350px" width="44" height="44" viewBox="0 0 44 44"><circle cx="22" cy="22" r="17.6" fill="none" stroke="#3b170d" stroke-width="4.2"/><path d="M16.6 18.2C16.6 14.6 19 12.9 22 12.9C25.2 12.9 27.4 14.8 27.4 17.5C27.4 21.2 22.2 21.6 22.2 26.2" fill="none" stroke="#3b170d" stroke-width="4.1"/><circle cx="22.1" cy="31.6" r="2.3" fill="#3b170d"/></svg>
<span class="t" style="left:2348.51px;top:1357.59px;font-size:31.2px;letter-spacing:0.519px;color:#3b170d;font-weight:700;-webkit-text-stroke:0.4px #3b170d;">Help</span>
<div style="left:2504px;top:4px;width:2px;height:1440px;background:#ebebeb"></div>
<div style="left:2506px;top:4px;width:2px;height:1440px;background:#fafafa"></div>
</div></body></html>
